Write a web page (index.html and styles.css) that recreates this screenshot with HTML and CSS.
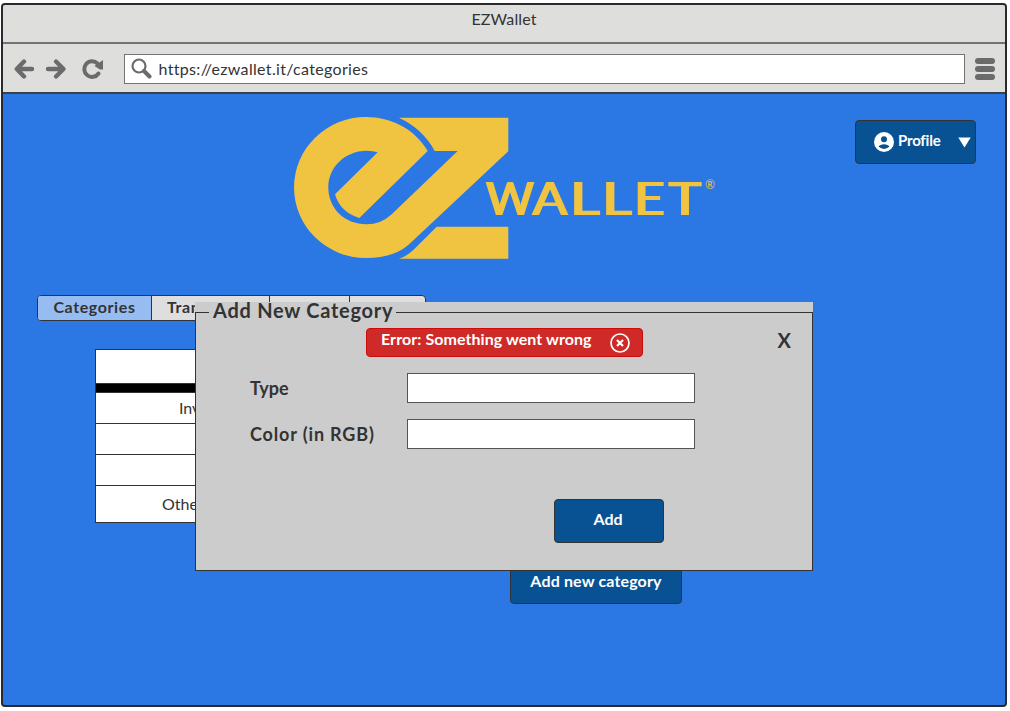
FILE: index.html
```html
<!DOCTYPE html>
<html lang="en">
<head>
<meta charset="utf-8">
<title>EZWallet</title>
<link rel="stylesheet" href="styles.css">
</head>
<body>
<div class="window">
  <header class="titlebar"><span class="title">EZWallet</span></header>
  <nav class="toolbar">
    <svg class="nav-icons" width="92" height="22" viewBox="0 0 92 22" fill="none" stroke="#6b6b6b" stroke-width="4.4" stroke-linecap="round" stroke-linejoin="round">
      <path d="M18 11H4M10 3.500L2.800 11L10 18.500"/>
      <path d="M34 11H49M42 3.500L49.500 11L42 18.500"/>
      <path d="M84.500 15.500A7.800 7.800 0 1 1 83.500 5.500" stroke-width="4"/>
      <path d="M89 2V11.500H86L80.500 8Z" fill="#6b6b6b" stroke="none"/>
    </svg>
    <div class="address">
      <svg class="search" width="21" height="21" viewBox="0 0 21 21" fill="none" stroke="#6b6b6b"><circle cx="8" cy="8" r="6.500" stroke-width="2.200"/><path d="M13 13L18.500 18.500" stroke-width="4" stroke-linecap="round"/></svg>
      <span class="url">https://ezwallet.it/categories</span>
    </div>
    <div class="menu"><i></i><i></i><i></i></div>
  </nav>
  <main class="page">
    <div class="top">
      <svg class="logo" width="430" height="150" viewBox="290 113 430 150" fill="#f0c441">
        <filter id="widen" x="-5%" y="-5%" width="110%" height="110%"><feMorphology operator="dilate" radius="1 0"/></filter>
        <path d="M427.700 151L359.300 218Q340 212 335 194.300L377.700 152.300Q373 150.700 366.700 150.700C344 151 328.300 168 328.300 187.300C328.300 208 344 224.300 366.700 224.300Q381 224.300 391.700 214.300L457.700 151H434.700Q423 129 399 117.700H508.300V151.300L408.300 245Q393 258 366 258A72 70.500 0 0 1 366 117C391 117 415 129 427.700 151Z"/>
        <path d="M436.700 226.700H508.300V258.700H399Q406.500 256.500 413.300 250Z"/>
        <text class="logo-text" y="214.500" filter="url(#widen)"><tspan x="486" textLength="48" lengthAdjust="spacingAndGlyphs">W</tspan><tspan x="532.500" textLength="35" lengthAdjust="spacingAndGlyphs">A</tspan><tspan x="570" textLength="30" lengthAdjust="spacingAndGlyphs">L</tspan><tspan x="602" textLength="30" lengthAdjust="spacingAndGlyphs">L</tspan><tspan x="634" textLength="31" lengthAdjust="spacingAndGlyphs">E</tspan><tspan x="668.500" textLength="33" lengthAdjust="spacingAndGlyphs">T</tspan></text>
        <text class="logo-reg" x="705" y="189" textLength="10" lengthAdjust="spacingAndGlyphs">®</text>
      </svg>
      <button class="btn profile">
        <svg width="20" height="20" viewBox="0 0 20 20"><circle cx="10" cy="10" r="10" fill="#fff"/><circle cx="10" cy="7.300" r="3" fill="#085293"/><path d="M4.600 14.800C5.500 11.300 14.500 11.300 15.400 14.800Q10 19 4.600 14.800Z" fill="#085293"/></svg>
        <span class="profile-name">Profile</span>
        <svg class="caret" width="13" height="11" viewBox="0 0 13 11"><path d="M.3 .5H12.700L6.500 10.500Z" fill="#fff"/></svg>
      </button>
    </div>
    <div class="tabs">
      <div class="tab active"><span>Categories</span></div>
      <div class="tab"><span>Transactions</span></div>
      <div class="tab"></div>
      <div class="tab"></div>
    </div>
    <div class="table">
      <div class="row head"></div>
      <div class="row bar"></div>
      <div class="row first"><span>Investment</span></div>
      <div class="row"></div>
      <div class="row"></div>
      <div class="row last"><span>Other expenses</span></div>
    </div>
    <button class="btn new-category"><span>Add new category</span></button>
  </main>
  <section class="modal">
    <div class="legend"><span class="dash"></span><h2>Add New Category</h2><span class="rule"></span></div>
    <div class="modal-body">
      <div class="modal-top">
        <div class="error"><span>Error: Something went wrong</span>
          <svg width="20" height="20" viewBox="0 0 20 20" fill="none" stroke="#fff"><circle cx="10" cy="10" r="9" stroke-width="1.700"/><path d="M7 7L13 13M13 7L7 13" stroke-width="2.200"/></svg>
        </div>
        <span class="close">X</span>
      </div>
      <div class="field"><label>Type</label><div class="input"></div></div>
      <div class="field"><label class="wide">Color (in RGB)</label><div class="input"></div></div>
      <button class="btn add"><span>Add</span></button>
    </div>
  </section>
</div>
</body>
</html>
```
FILE: styles.css
```css
* { box-sizing: border-box; }
body { margin: 0; padding: 3px 0 0 1px; height: 711px; overflow: hidden; background: #fff; color: #333; font: 16px Lato, "Open Sans", sans-serif; }
span, h2 { white-space: nowrap; }
.window { position: relative; width: 1006px; height: 704px; border: 2px solid #282a2e; border-radius: 4px; background: #2b78e4; overflow: hidden; }
.titlebar { height: 39px; background: #dededd; border-bottom: 2px solid #737373; display: flex; justify-content: center; padding: 3px 0 0 0; }
.title { line-height: 22px; letter-spacing: .1px; }
.toolbar { height: 50px; background: #dededd; border-bottom: 2px solid #3c4148; display: flex; align-items: center; padding: 1px 10px 0 11px; }
.nav-icons { flex: none; }
.address { width: 841px; height: 30px; margin-left: 18px; background: #fff; border: 1px solid #747474; display: flex; align-items: center; padding-left: 6px; }
.url { margin-left: 6.5px; letter-spacing: .33px; line-height: 20px; }
.menu { margin-left: 10px; display: grid; gap: 2px; }
.menu i { width: 20px; height: 6px; border-radius: 3px; background: #6b6b6b; }
.page { padding: 19px 29px 0 34px; }
.top { display: flex; height: 182px; }
.logo { margin-left: 253px; flex: none; }
.logo-text { font: 500 46px Lato, sans-serif; }
.logo-reg { font: 14px Lato, sans-serif; }
.btn { font: 700 16px Lato, sans-serif; color: #fff; background: #085293; border: 1px solid #333; border-radius: 4px; padding: 0 0 3px; display: flex; align-items: center; justify-content: center; }
.profile { width: 121px; height: 44px; margin: 7px 0 0 auto; justify-content: flex-start; padding: 0 4px 0 18px; }
.profile-name { margin-left: 4px; font-size: 15px; letter-spacing: -.2px; padding-bottom: 4px; }
.caret { margin-left: auto; }
.tabs { display: flex; width: 389px; height: 26px; border: 1px solid #333; border-radius: 4px; background: #dedede; overflow: hidden; font-weight: 700; }
.tab { flex: none; width: 80px; display: flex; align-items: center; justify-content: center; border-right: 1px solid #333; letter-spacing: .6px; padding-bottom: 3px; }
.tab:nth-child(1) { width: 114px; }
.tab:nth-child(2) { width: 118px; justify-content: flex-start; padding-left: 15px; }
.tab:last-child { border: 0; }
.active { background: #96bcf2; }
.table { width: 310px; margin: 28px 0 0 58px; border: 1px solid #333; background: #fff; }
.row { height: 31px; border-bottom: 1px solid #333; display: flex; align-items: center; padding-bottom: 2px; }
.head { height: 34px; }
.bar { height: 9px; background: #000; }
.first { padding-left: 83px; }
.last { height: 36px; border: 0; padding-left: 66px; }
.new-category { width: 172px; height: 44px; margin: 37px 0 0 473px; letter-spacing: .15px; }
.modal { position: absolute; left: 192px; top: 297px; width: 618px; height: 269px; background: #ccc; }
.legend { height: 20px; display: flex; align-items: center; }
.legend h2 { font-size: 20px; line-height: 20px; margin: 0 3px 4px 4px; letter-spacing: .73px; }
.dash { width: 14px; height: 1px; background: #333; }
.rule { flex: 1; height: 1px; background: #333; }
.modal-body { height: 259px; margin-top: -10px; border: 1px solid #333; border-top: 0; padding: 16px 21px 0 54px; }
.modal-top { display: flex; height: 45px; padding-left: 116px; justify-content: space-between; }
.error { width: 277px; height: 29px; border: 1px solid #cc0b0b; border-radius: 4px; background: #cf2a27; color: #fff; font-weight: 700; display: flex; padding: 0 12px 0 14px; justify-content: space-between; }
.error span { line-height: 20px; letter-spacing: .07px; }
.error svg { margin-top: 4px; }
.close { font-size: 20px; font-weight: 700; line-height: 24px; }
.field { display: flex; height: 46px; }
.field label { width: 157px; font-weight: 700; font-size: 18px; line-height: 30px; }
.field .wide { letter-spacing: .85px; }
.input { width: 288px; height: 30px; border: 1px solid #555; background: #fff; }
.add { width: 110px; height: 44px; margin: 34px 0 0 304px; padding: 0 2px 5px 0; }
```
